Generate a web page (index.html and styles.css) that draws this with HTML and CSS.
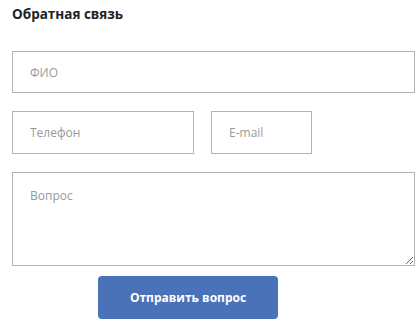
FILE: index.html
```html
<!DOCTYPE html>
<html lang="ru">
<head>
<meta charset="utf-8">
<link rel="stylesheet" href="styles.css">
</head>
<body>
<form class="feedback">
  <h2 class="title">Обратная связь</h2>
  <input class="field field-full" type="text" placeholder="ФИО">
  <div class="row">
    <input class="field field-phone" type="text" placeholder="Телефон">
    <input class="field field-mail" type="text" placeholder="E-mail">
  </div>
  <textarea class="field field-area" placeholder="Вопрос"></textarea>
  <div class="actions">
    <button class="submit" type="button">Отправить вопрос</button>
  </div>
</form>
</body>
</html>
```
FILE: styles.css
```css
html, body {
  margin: 0;
  padding: 0;
  background: #fff;
}
.feedback {
  display: flex;
  flex-direction: column;
  padding: 4px 5px 0 12px;
  width: 402px;
  font-family: "Open Sans", "Noto Sans", sans-serif;
}
.title {
  margin: 0 0 27px 0;
  font-size: 13.5px;
  font-weight: 700;
  line-height: 20px;
  color: #222;
}
.field {
  box-sizing: border-box;
  border: 1px solid #b3b3b3;
  border-radius: 0;
  background: #fff;
  font-family: "Open Sans", "Noto Sans", sans-serif;
  font-size: 12px;
  color: #333;
  padding: 0 0 0 17px;
  margin: 0;
  outline: none;
}
.field::placeholder {
  color: #9a9a9a;
}
.field-full {
  width: 403px;
  height: 42px;
}
.row {
  display: flex;
  gap: 17px;
  margin-top: 18px;
}
.field-phone {
  width: 182px;
  height: 43px;
}
.field-mail {
  width: 101px;
  height: 43px;
}
.field-area {
  margin-top: 18px;
  width: 403px;
  height: 94px;
  padding: 14px 17px;
  resize: vertical;
  display: block;
}
.actions {
  padding-left: 86px;
  margin-top: 10px;
}
.submit {
  width: 180px;
  height: 43px;
  border: none;
  border-radius: 4px;
  background: #4a72b9;
  color: #fff;
  font-family: "Open Sans", "Noto Sans", sans-serif;
  font-size: 12px;
  font-weight: 700;
  cursor: pointer;
}
```
